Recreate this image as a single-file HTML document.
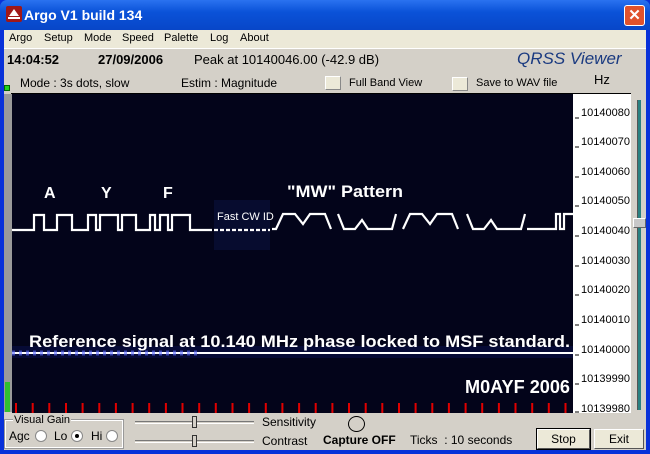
<!DOCTYPE html>
<html><head><style>
*{margin:0;padding:0;box-sizing:border-box}
body{width:650px;height:454px;overflow:hidden;font-family:"Liberation Sans",sans-serif;background:#0831d9;position:relative}
.abs{position:absolute}
#title{left:0;top:0;width:650px;height:30px;background:linear-gradient(#2a72f0,#0a52d8 40%,#0846c8);border-radius:7px 7px 0 0}
#title span{position:absolute;left:24px;top:7px;color:#fff;font-weight:bold;font-size:14px}
#client{left:4px;top:30px;width:642px;height:420px;background:#d4d0c8}
#menu{left:4px;top:30px;width:642px;height:18px;background:#ece9d8;font-size:11px}
#menu span{position:absolute;top:2px}
.t{font-size:12px;color:#000;position:absolute;white-space:nowrap}
.btn{position:absolute;background:#ece9d8;border:1px solid #fff;border-right-color:#555;border-bottom-color:#555;font-size:11px;text-align:center}
.rad{position:absolute;width:12px;height:12px;border-radius:50%;background:#fff;border:1px solid #888}
</style></head><body>
<div id="title" class="abs"><div class="abs" style="left:6px;top:6px;width:16px;height:16px;background:#a01818;border-radius:2px"><div style="position:absolute;left:3px;top:3px;width:0;height:0;border-left:5px solid transparent;border-right:5px solid transparent;border-bottom:7px solid #fff"></div><div style="position:absolute;left:2px;top:11px;width:12px;height:2px;background:#fff"></div></div><span>Argo V1 build 134</span>
<div class="abs" style="left:624px;top:5px;width:21px;height:21px;background:#e0522c;border:1px solid #fff;border-radius:3px;color:#fff;font-size:15px;font-weight:bold;text-align:center;line-height:19px">✕</div></div>
<div id="client" class="abs"></div>
<div id="menu" class="abs"><span style="left:5px">Argo</span><span style="left:40px">Setup</span><span style="left:80px">Mode</span><span style="left:118px">Speed</span><span style="left:160px">Palette</span><span style="left:206px">Log</span><span style="left:236px">About</span></div>
<div class="abs" style="left:4px;top:48px;width:642px;height:1px;background:#fff"></div>
<div class="t" style="left:7px;top:52px;font-weight:bold;font-size:13px">14:04:52</div>
<div class="t" style="left:98px;top:52px;font-weight:bold;font-size:13px">27/09/2006</div>
<div class="t" style="left:194px;top:52px;font-size:13px">Peak at 10140046.00 (-42.9 dB)</div>
<div class="t" style="left:517px;top:49px;font-size:17px;font-style:italic;color:#1a3a80">QRSS Viewer</div>
<div class="t" style="left:20px;top:76px">Mode : 3s dots, slow</div>
<div class="t" style="left:181px;top:76px">Estim : Magnitude</div>
<div class="abs" style="left:325px;top:76px;width:16px;height:14px;background:#ece9d8;border:1px solid #fff;border-right-color:#888;border-bottom-color:#888"></div>
<div class="t" style="left:349px;top:77px;font-size:11px">Full Band View</div>
<div class="abs" style="left:452px;top:77px;width:16px;height:14px;background:#ece9d8;border:1px solid #fff;border-right-color:#888;border-bottom-color:#888"></div>
<div class="t" style="left:476px;top:77px;font-size:11px">Save to WAV file</div>
<div class="t" style="left:594px;top:72px;font-size:13px">Hz</div>
<div class="abs" style="left:4px;top:85px;width:6px;height:6px;background:#20d020;border:1px solid #060"></div>
<div class="abs" style="left:4px;top:94px;width:8px;height:318px;background:#9a9a9a"></div>
<div class="abs" style="left:5px;top:382px;width:5px;height:30px;background:#30c030"></div>
<div class="abs" style="left:11px;top:93px;width:620px;height:1px;background:#000"></div>
<svg class="abs" style="left:12px;top:94px" width="561" height="319" viewBox="12 94 561 319">
<rect x="12" y="94" width="561" height="319" fill="#03041a"/>
<rect x="214" y="200" width="56" height="50" fill="#101850" opacity=".4"/>
<rect x="12" y="346" width="561" height="12" fill="#0c1560" opacity=".4"/>
<g stroke="#fff" stroke-width="2.2" fill="none">
<polyline points="12,230 34,230 34,215 44,215 44,230 57,230 57,215 72,215 72,230 88,230 88,215 96,215 96,230 100,230 100,215 118,215 118,230 122,230 122,215 136,215 136,230 150,230 150,215 155,215 155,230 160,230 160,215 168,215 168,230 172,230 172,215 190,215 190,230 212,230"/>
<path d="M214 230 H270" stroke-dasharray="4 2"/>
<polyline points="272,229 276,229 283,214 295,214 303,224 310,214 325,214 331,229"/>
<polyline points="338,214 344,229 355,229 362,220 368,229 392,229 396,214"/>
<polyline points="403,229 410,214 422,214 430,224 437,214 452,214 458,229"/>
<polyline points="467,214 473,229 484,229 491,220 497,229 521,229 525,214"/>
<polyline points="527,229 556,229 556,214 560,214 560,229 564,229 564,214 573,214"/>
<path d="M12 353 H573" stroke-width="2"/>
</g>
<path d="M12 353 H200" stroke="#5a6aff" stroke-width="5" stroke-dasharray="3 4" opacity=".6"/>
<g font-family="Liberation Sans" font-weight="bold" fill="#fff">
<text x="44" y="198" font-size="16">A</text><text x="101" y="198" font-size="16">Y</text><text x="163" y="198" font-size="16">F</text>
<text x="287" y="197" font-size="17" textLength="116" lengthAdjust="spacingAndGlyphs">"MW" Pattern</text>
<text x="217" y="220" font-size="11" font-weight="normal">Fast CW ID</text>
<text x="29" y="347" font-size="17" textLength="541" lengthAdjust="spacingAndGlyphs">Reference signal at 10.140 MHz phase locked to MSF standard.</text>
<text x="465" y="393" font-size="18" textLength="105" lengthAdjust="spacingAndGlyphs">M0AYF 2006</text>
</g>
<g stroke="#e00000" stroke-width="2">
<path d="M16 403V413M32.7 403V413M49.3 403V413M66 403V413M82.6 403V413M99.3 403V413M115.9 403V413M132.6 403V413M149.2 403V413M165.9 403V413M182.5 403V413M199.2 403V413M215.8 403V413M232.5 403V413M249.1 403V413M265.8 403V413M282.4 403V413M299.1 403V413M315.7 403V413M332.4 403V413M349 403V413M365.7 403V413M382.3 403V413M399 403V413M415.6 403V413M432.3 403V413M448.9 403V413M465.6 403V413M482.2 403V413M498.9 403V413M515.5 403V413M532.2 403V413M548.8 403V413M565.5 403V413"/>
</g>
</svg>
<svg class="abs" style="left:573px;top:94px" width="58" height="319">
<rect width="58" height="319" fill="#fff"/>
<g font-family="Liberation Sans" font-size="11" fill="#000">
<text x="8" y="22">10140080</text><text x="8" y="51">10140070</text><text x="8" y="81">10140060</text><text x="8" y="110">10140050</text><text x="8" y="140">10140040</text><text x="8" y="170">10140030</text><text x="8" y="199">10140020</text><text x="8" y="229">10140010</text><text x="8" y="259">10140000</text><text x="8" y="288">10139990</text><text x="8" y="318">10139980</text>
</g>
<g stroke="#000"><path d="M2 24H6M2 53H6M2 83H6M2 112H6M2 142H6M2 172H6M2 201H6M2 231H6M2 261H6M2 290H6M2 318H6"/></g>
</svg>
<div class="abs" style="left:637px;top:100px;width:4px;height:310px;background:#2a8080;border-left:1px solid #555"></div>
<div class="abs" style="left:633px;top:218px;width:13px;height:10px;background:#c8c8c8;border:1px solid #fff;border-right-color:#666;border-bottom-color:#666"></div>
<div class="abs" style="left:5px;top:420px;width:118px;height:28px;border:1px solid #fff;outline:1px solid #999"></div>
<div class="t" style="left:13px;top:414px;font-size:11px;background:#d4d0c8;padding:0 1px">Visual Gain</div>
<div class="t" style="left:9px;top:429px;font-size:12px">Agc</div><div class="rad" style="left:35px;top:430px"></div>
<div class="t" style="left:54px;top:429px;font-size:12px">Lo</div><div class="rad" style="left:71px;top:430px"><div style="margin:3px;width:4px;height:4px;border-radius:50%;background:#000"></div></div>
<div class="t" style="left:91px;top:429px;font-size:12px">Hi</div><div class="rad" style="left:106px;top:430px"></div>
<div class="abs" style="left:135px;top:421px;width:119px;height:3px;border-top:1px solid #777;border-bottom:1px solid #fff"></div>
<div class="abs" style="left:135px;top:440px;width:119px;height:3px;border-top:1px solid #777;border-bottom:1px solid #fff"></div>
<div class="abs" style="left:192px;top:416px;width:5px;height:12px;background:#d4d0c8;border:1px solid #333"></div>
<div class="abs" style="left:192px;top:435px;width:5px;height:12px;background:#d4d0c8;border:1px solid #333"></div>
<div class="t" style="left:262px;top:415px;font-size:12px">Sensitivity</div>
<div class="t" style="left:262px;top:434px;font-size:12px">Contrast</div>
<div class="abs" style="left:348px;top:416px;width:17px;height:16px;border-radius:50%;border:1px solid #000"></div>
<div class="t" style="left:323px;top:433px;font-size:12px;font-weight:bold">Capture OFF</div>
<div class="t" style="left:410px;top:433px;font-size:12px">Ticks &nbsp;: 10 seconds</div>
<div class="btn" style="left:537px;top:429px;width:53px;height:20px;line-height:18px;outline:1px solid #000;font-size:12px">Stop</div>
<div class="btn" style="left:594px;top:429px;width:50px;height:20px;line-height:18px;font-size:12px">Exit</div>
</body></html>
